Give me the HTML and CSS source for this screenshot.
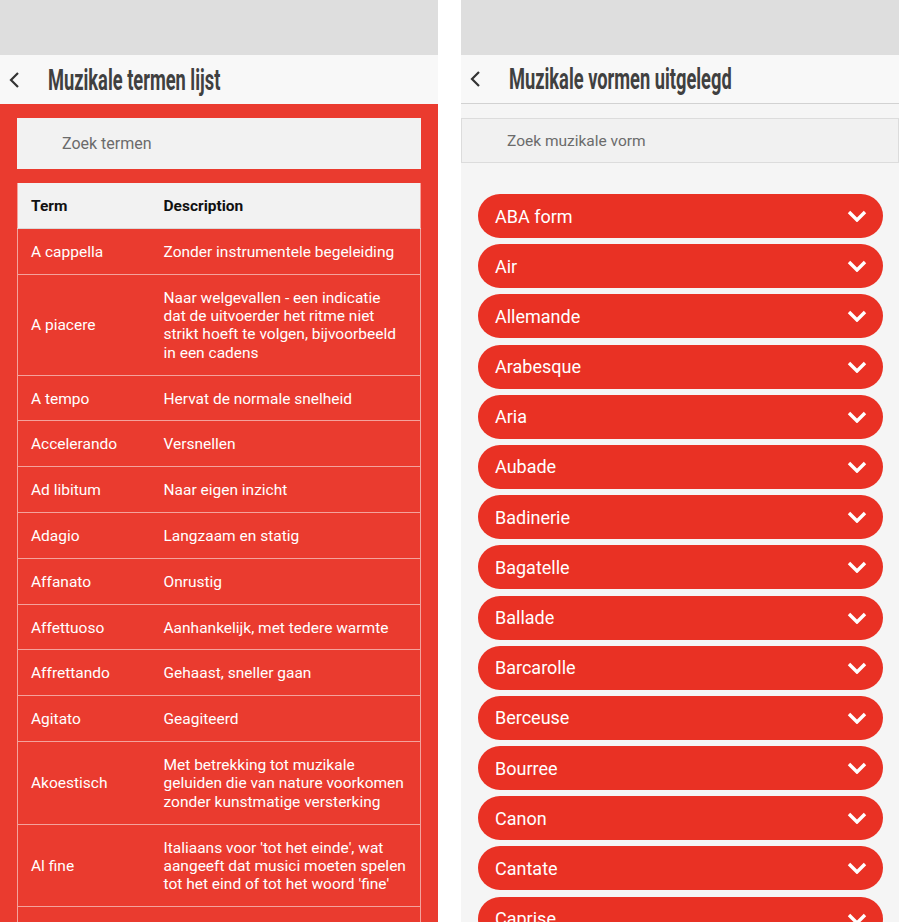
FILE: index.html
```html
<!DOCTYPE html>
<html>
    <head>
        <title>Muzikale termen</title>
        <link rel="stylesheet" href="styles.css">
    </head>
    <body>
        <div class="screen screen-terms">
            <div class="statusbar"></div>
            <div class="topbar">
                <svg class="back" width="14" height="18" viewBox="0 0 14 18"><polyline points="11,2 4,9 11,16" fill="none" stroke="#333" stroke-width="2.2"/></svg>
                <h1>Muzikale termen lijst</h1>
            </div>
            <div class="content red">
                <div class="search">Zoek termen</div>
                <table class="terms">
                    <colgroup><col class="c-term"><col></colgroup>
                    <tr><th>Term</th><th>Description</th></tr>
                    <tr><td>A cappella</td><td>Zonder instrumentele begeleiding</td></tr>
                    <tr><td>A piacere</td><td>Naar welgevallen - een indicatie dat de uitvoerder het ritme niet strikt hoeft te volgen, bijvoorbeeld in een cadens</td></tr>
                    <tr><td>A tempo</td><td>Hervat de normale snelheid</td></tr>
                    <tr><td>Accelerando</td><td>Versnellen</td></tr>
                    <tr><td>Ad libitum</td><td>Naar eigen inzicht</td></tr>
                    <tr><td>Adagio</td><td>Langzaam en statig</td></tr>
                    <tr><td>Affanato</td><td>Onrustig</td></tr>
                    <tr><td>Affettuoso</td><td>Aanhankelijk, met tedere warmte</td></tr>
                    <tr><td>Affrettando</td><td>Gehaast, sneller gaan</td></tr>
                    <tr><td>Agitato</td><td>Geagiteerd</td></tr>
                    <tr><td>Akoestisch</td><td>Met betrekking tot muzikale geluiden die van nature voorkomen zonder kunstmatige versterking</td></tr>
                    <tr><td>Al fine</td><td>Italiaans voor 'tot het einde', wat aangeeft dat musici moeten spelen tot het eind of tot het woord 'fine'</td></tr>
                    <tr><td>Allargando</td><td>Breder en langzamer</td></tr>
                </table>
            </div>
        </div>

        <div class="screen screen-forms">
            <div class="statusbar"></div>
            <div class="topbar line">
                <svg class="back" width="14" height="18" viewBox="0 0 14 18"><polyline points="11,2 4,9 11,16" fill="none" stroke="#333" stroke-width="2.2"/></svg>
                <h1>Muzikale vormen uitgelegd</h1>
            </div>
            <div class="content grey">
                <div class="search wide">Zoek muzikale vorm</div>
                <div class="forms">
                    <div class="form-item">ABA form<svg class="chev" width="20" height="12" viewBox="0 0 20 12"><polyline points="2,2 10,10 18,2" fill="none" stroke="#fff" stroke-width="3.4"/></svg></div>
                    <div class="form-item">Air<svg class="chev" width="20" height="12" viewBox="0 0 20 12"><polyline points="2,2 10,10 18,2" fill="none" stroke="#fff" stroke-width="3.4"/></svg></div>
                    <div class="form-item">Allemande<svg class="chev" width="20" height="12" viewBox="0 0 20 12"><polyline points="2,2 10,10 18,2" fill="none" stroke="#fff" stroke-width="3.4"/></svg></div>
                    <div class="form-item">Arabesque<svg class="chev" width="20" height="12" viewBox="0 0 20 12"><polyline points="2,2 10,10 18,2" fill="none" stroke="#fff" stroke-width="3.4"/></svg></div>
                    <div class="form-item">Aria<svg class="chev" width="20" height="12" viewBox="0 0 20 12"><polyline points="2,2 10,10 18,2" fill="none" stroke="#fff" stroke-width="3.4"/></svg></div>
                    <div class="form-item">Aubade<svg class="chev" width="20" height="12" viewBox="0 0 20 12"><polyline points="2,2 10,10 18,2" fill="none" stroke="#fff" stroke-width="3.4"/></svg></div>
                    <div class="form-item">Badinerie<svg class="chev" width="20" height="12" viewBox="0 0 20 12"><polyline points="2,2 10,10 18,2" fill="none" stroke="#fff" stroke-width="3.4"/></svg></div>
                    <div class="form-item">Bagatelle<svg class="chev" width="20" height="12" viewBox="0 0 20 12"><polyline points="2,2 10,10 18,2" fill="none" stroke="#fff" stroke-width="3.4"/></svg></div>
                    <div class="form-item">Ballade<svg class="chev" width="20" height="12" viewBox="0 0 20 12"><polyline points="2,2 10,10 18,2" fill="none" stroke="#fff" stroke-width="3.4"/></svg></div>
                    <div class="form-item">Barcarolle<svg class="chev" width="20" height="12" viewBox="0 0 20 12"><polyline points="2,2 10,10 18,2" fill="none" stroke="#fff" stroke-width="3.4"/></svg></div>
                    <div class="form-item">Berceuse<svg class="chev" width="20" height="12" viewBox="0 0 20 12"><polyline points="2,2 10,10 18,2" fill="none" stroke="#fff" stroke-width="3.4"/></svg></div>
                    <div class="form-item">Bourree<svg class="chev" width="20" height="12" viewBox="0 0 20 12"><polyline points="2,2 10,10 18,2" fill="none" stroke="#fff" stroke-width="3.4"/></svg></div>
                    <div class="form-item">Canon<svg class="chev" width="20" height="12" viewBox="0 0 20 12"><polyline points="2,2 10,10 18,2" fill="none" stroke="#fff" stroke-width="3.4"/></svg></div>
                    <div class="form-item">Cantate<svg class="chev" width="20" height="12" viewBox="0 0 20 12"><polyline points="2,2 10,10 18,2" fill="none" stroke="#fff" stroke-width="3.4"/></svg></div>
                    <div class="form-item">Caprise<svg class="chev" width="20" height="12" viewBox="0 0 20 12"><polyline points="2,2 10,10 18,2" fill="none" stroke="#fff" stroke-width="3.4"/></svg></div>
                </div>
            </div>
        </div>
    </body>
</html>
```

FILE: styles.css
```css
html, body
{
    height: 100%;
}

body
{
    margin: 0;
    background-color: #fff;
    font-family: Roboto, "Noto Sans", sans-serif;
    display: flex;
    gap: 23px;
    overflow: hidden;
}

.screen
{
    width: 438px;
    height: 922px;
    display: flex;
    flex-direction: column;
    overflow: hidden;
}

.statusbar
{
    height: 55px;
    flex: none;
    background-color: #dedede;
}

.topbar
{
    height: 49px;
    flex: none;
    display: flex;
    align-items: center;
    background-color: #f8f8f8;
    box-sizing: border-box;
}

.topbar.line
{
    border-bottom: 1px solid #d2d2d2;
}

.back
{
    margin-left: 7px;
    flex: none;
}

/* condensed display title, squeezed from Roboto */
.topbar h1
{
    margin: 0 0 0 27px;
    font-family: Roboto, sans-serif;
    font-weight: bold;
    font-size: 29px;
    color: #404040;
    white-space: nowrap;
    transform: scaleX(0.63);
    transform-origin: left center;
}

.content
{
    flex: 1;
    padding-top: 14px;
}

.red
{
    background-color: #ea3b2f;
    padding-left: 17px;
    padding-right: 17px;
}

.grey
{
    background-color: #f5f5f5;
}

.search
{
    height: 51px;
    box-sizing: border-box;
    padding-left: 45px;
    display: flex;
    align-items: center;
    background-color: #f2f2f2;
    color: #6b6b6b;
    font-size: 16px;
    margin-bottom: 14px;
}

.search.wide
{
    height: 45px;
    border: 1px solid #dcdcdc;
    background-color: #f1f1f1;
    font-size: 15.5px;
    margin-bottom: 31px;
}

.terms
{
    width: 100%;
    border-collapse: collapse;
    table-layout: fixed;
    font-size: 15.5px;
    line-height: 18.4px;
    border-left: 1px solid #f4a29c;
    border-right: 1px solid #f4a29c;
}

.c-term
{
    width: 132px;
}

.terms th, .terms td
{
    text-align: left;
    vertical-align: middle;
    padding: 14px 14px 12.4px 14px;
    border-bottom: 1px solid #f4a29c;
}

.terms th:first-child, .terms td:first-child
{
    padding-left: 13px;
}

.terms th
{
    background-color: #f2f2f2;
    color: #111;
    font-weight: bold;
    border-bottom-color: #d9d9d9;
}

.terms td
{
    color: #fff;
}

.forms
{
    padding: 0 16px 0 17px;
}

.form-item
{
    height: 44px;
    margin-bottom: 6.2px;
    border-radius: 22px;
    background-color: #e93124;
    color: #fff;
    font-size: 18px;
    display: flex;
    align-items: center;
    justify-content: space-between;
    padding: 0 16px 0 17px;
}

.chev
{
    flex: none;
}
```
